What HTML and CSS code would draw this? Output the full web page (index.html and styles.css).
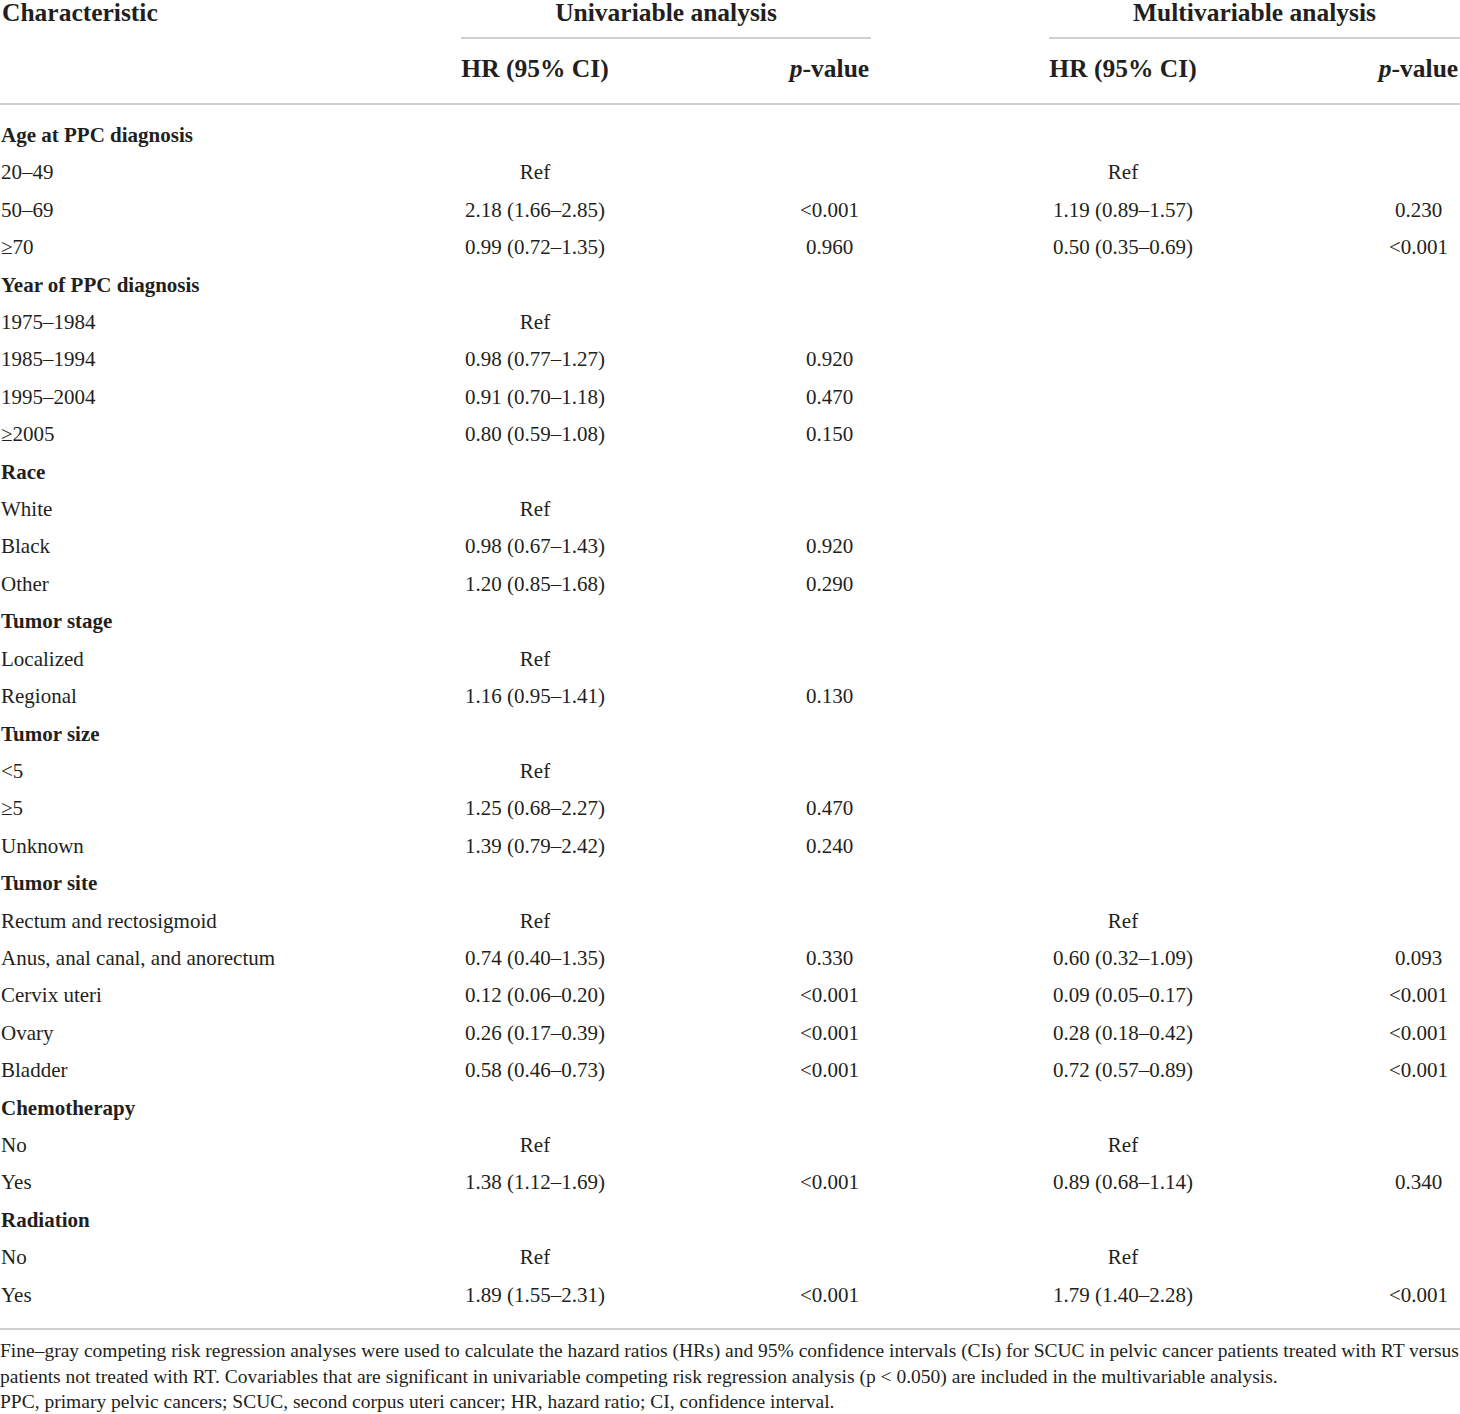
FILE: index.html
```
<!DOCTYPE html>
<html lang="en">
<head>
    <meta charset="UTF-8">
    <meta name="viewport" content="width=device-width, initial-scale=1.0">
    <title>Competing risk regression</title>
    <link rel="stylesheet" href="styles.css">
</head>
<body>
    <div class="table-wrap">
        <table class="risk-table">
            <colgroup>
                <col class="col-char">
                <col class="col-hr1">
                <col class="col-p1">
                <col class="col-hr2">
                <col class="col-p2">
            </colgroup>
            <thead>
                <tr class="head-top">
                    <th rowspan="2" class="head-char">Characteristic</th>
                    <th colspan="2" class="head-group"><div class="group-line">Univariable analysis</div></th>
                    <th colspan="2" class="head-group head-group-multi"><div class="group-line">Multivariable analysis</div></th>
                </tr>
                <tr class="head-sub">
                    <th class="hr">HR (95% CI)</th>
                    <th class="p p1"><i>p</i>-value</th>
                    <th class="hr hr2">HR (95% CI)</th>
                    <th class="p p2"><i>p</i>-value</th>
                </tr>
            </thead>
            <tbody>
                <tr class="group"><td colspan="5">Age at PPC diagnosis</td></tr>
                <tr><td>20–49</td><td class="hr">Ref</td><td class="p p1"></td><td class="hr hr2">Ref</td><td class="p p2"></td></tr>
                <tr><td>50–69</td><td class="hr">2.18 (1.66–2.85)</td><td class="p p1">&lt;0.001</td><td class="hr hr2">1.19 (0.89–1.57)</td><td class="p p2">0.230</td></tr>
                <tr><td>≥70</td><td class="hr">0.99 (0.72–1.35)</td><td class="p p1">0.960</td><td class="hr hr2">0.50 (0.35–0.69)</td><td class="p p2">&lt;0.001</td></tr>

                <tr class="group"><td colspan="5">Year of PPC diagnosis</td></tr>
                <tr><td>1975–1984</td><td class="hr">Ref</td><td class="p p1"></td><td class="hr hr2"></td><td class="p p2"></td></tr>
                <tr><td>1985–1994</td><td class="hr">0.98 (0.77–1.27)</td><td class="p p1">0.920</td><td class="hr hr2"></td><td class="p p2"></td></tr>
                <tr><td>1995–2004</td><td class="hr">0.91 (0.70–1.18)</td><td class="p p1">0.470</td><td class="hr hr2"></td><td class="p p2"></td></tr>
                <tr><td>≥2005</td><td class="hr">0.80 (0.59–1.08)</td><td class="p p1">0.150</td><td class="hr hr2"></td><td class="p p2"></td></tr>

                <tr class="group"><td colspan="5">Race</td></tr>
                <tr><td>White</td><td class="hr">Ref</td><td class="p p1"></td><td class="hr hr2"></td><td class="p p2"></td></tr>
                <tr><td>Black</td><td class="hr">0.98 (0.67–1.43)</td><td class="p p1">0.920</td><td class="hr hr2"></td><td class="p p2"></td></tr>
                <tr><td>Other</td><td class="hr">1.20 (0.85–1.68)</td><td class="p p1">0.290</td><td class="hr hr2"></td><td class="p p2"></td></tr>

                <tr class="group"><td colspan="5">Tumor stage</td></tr>
                <tr><td>Localized</td><td class="hr">Ref</td><td class="p p1"></td><td class="hr hr2"></td><td class="p p2"></td></tr>
                <tr><td>Regional</td><td class="hr">1.16 (0.95–1.41)</td><td class="p p1">0.130</td><td class="hr hr2"></td><td class="p p2"></td></tr>

                <tr class="group"><td colspan="5">Tumor size</td></tr>
                <tr><td>&lt;5</td><td class="hr">Ref</td><td class="p p1"></td><td class="hr hr2"></td><td class="p p2"></td></tr>
                <tr><td>≥5</td><td class="hr">1.25 (0.68–2.27)</td><td class="p p1">0.470</td><td class="hr hr2"></td><td class="p p2"></td></tr>
                <tr><td>Unknown</td><td class="hr">1.39 (0.79–2.42)</td><td class="p p1">0.240</td><td class="hr hr2"></td><td class="p p2"></td></tr>

                <tr class="group"><td colspan="5">Tumor site</td></tr>
                <tr><td>Rectum and rectosigmoid</td><td class="hr">Ref</td><td class="p p1"></td><td class="hr hr2">Ref</td><td class="p p2"></td></tr>
                <tr><td>Anus, anal canal, and anorectum</td><td class="hr">0.74 (0.40–1.35)</td><td class="p p1">0.330</td><td class="hr hr2">0.60 (0.32–1.09)</td><td class="p p2">0.093</td></tr>
                <tr><td>Cervix uteri</td><td class="hr">0.12 (0.06–0.20)</td><td class="p p1">&lt;0.001</td><td class="hr hr2">0.09 (0.05–0.17)</td><td class="p p2">&lt;0.001</td></tr>
                <tr><td>Ovary</td><td class="hr">0.26 (0.17–0.39)</td><td class="p p1">&lt;0.001</td><td class="hr hr2">0.28 (0.18–0.42)</td><td class="p p2">&lt;0.001</td></tr>
                <tr><td>Bladder</td><td class="hr">0.58 (0.46–0.73)</td><td class="p p1">&lt;0.001</td><td class="hr hr2">0.72 (0.57–0.89)</td><td class="p p2">&lt;0.001</td></tr>

                <tr class="group"><td colspan="5">Chemotherapy</td></tr>
                <tr><td>No</td><td class="hr">Ref</td><td class="p p1"></td><td class="hr hr2">Ref</td><td class="p p2"></td></tr>
                <tr><td>Yes</td><td class="hr">1.38 (1.12–1.69)</td><td class="p p1">&lt;0.001</td><td class="hr hr2">0.89 (0.68–1.14)</td><td class="p p2">0.340</td></tr>

                <tr class="group"><td colspan="5">Radiation</td></tr>
                <tr><td>No</td><td class="hr">Ref</td><td class="p p1"></td><td class="hr hr2">Ref</td><td class="p p2"></td></tr>
                <tr class="last"><td>Yes</td><td class="hr">1.89 (1.55–2.31)</td><td class="p p1">&lt;0.001</td><td class="hr hr2">1.79 (1.40–2.28)</td><td class="p p2">&lt;0.001</td></tr>
            </tbody>
        </table>

        <p class="footnote">
            Fine–gray competing risk regression analyses were used to calculate the hazard ratios (HRs) and 95% confidence intervals (CIs) for SCUC in pelvic cancer patients treated with RT versus<br>
            patients not treated with RT. Covariables that are significant in univariable competing risk regression analysis (p &lt; 0.050) are included in the multivariable analysis.<br>
            PPC, primary pelvic cancers; SCUC, second corpus uteri cancer; HR, hazard ratio; CI, confidence interval.
        </p>
    </div>
</body>
</html>
```

FILE: styles.css
```
body {
    margin: 0;
    background-color: #fff;
    color: #231f20;
    font-family: "Liberation Serif", "Times New Roman", serif;
}

.table-wrap {
    width: 1460px;
}

.risk-table {
    width: 1460px;
    table-layout: fixed;
    border-collapse: separate;
    border-spacing: 0;
    font-size: 21px;
}

.col-char { width: 461px; }
.col-hr1 { width: 148px; }
.col-p1 { width: 262px; }
.col-hr2 { width: 326px; }
.col-p2 { width: 263px; }

.risk-table th,
.risk-table td {
    padding: 0;
    white-space: nowrap;
}

/* header */
.risk-table th {
    font-size: 25.5px;
    font-weight: bold;
    line-height: 25px;
}

.risk-table th.head-char {
    text-align: left;
    vertical-align: top;
    padding-left: 2px;
    border-bottom: 2px solid #cfcfcf;
}

.head-top .head-group {
    text-align: center;
    vertical-align: top;
}

/* rule under the spanning group titles */
.group-line::after {
    content: "";
    display: block;
    height: 2px;
    margin-top: 12px;
    background-color: #d0d0d0;
}

.risk-table th.head-group-multi {
    padding-left: 178px;
}

.head-sub th {
    padding-top: 17px;
    padding-bottom: 22px;
    border-bottom: 2px solid #cfcfcf;
}

/* body */
.risk-table td {
    line-height: 37.4px;
}

.hr,
.p {
    text-align: center;
}

.risk-table .p1 { padding-left: 179px; }
.risk-table .hr2 { padding-left: 178px; }
.risk-table .p2 { padding-left: 180px; }

.risk-table td:first-child {
    padding-left: 1px;
}

.group td {
    font-weight: bold;
}

.risk-table tbody tr:first-child td {
    padding-top: 12px;
}

.risk-table tbody tr.last td {
    padding-bottom: 14px;
    border-bottom: 2px solid #cfcfcf;
}

/* footnote */
.footnote {
    margin: 8px 0 0;
    font-size: 19.5px;
    line-height: 25.5px;
    white-space: nowrap;
}
```
